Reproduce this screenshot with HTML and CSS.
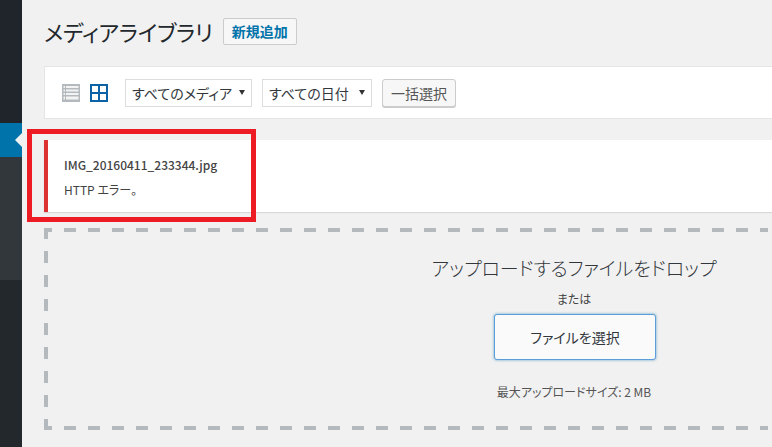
FILE: index.html
```html
<!DOCTYPE html>
<html lang="ja">
<head>
<meta charset="utf-8">
<title>メディアライブラリ</title>
<link rel="stylesheet" href="styles.css">
</head>
<body>
<aside class="sidebar">
  <div class="side-top"></div>
  <div class="side-active"><span class="side-arrow"></span></div>
  <div class="side-sub"></div>
  <div class="side-rest"></div>
</aside>
<main class="main">
  <header class="head">
    <h1 class="title">メディアライブラリ</h1>
    <a class="add-new">新規追加</a>
  </header>
  <section class="toolbar">
    <svg class="view-icon" width="18" height="18" viewBox="0 0 18 18" aria-hidden="true">
      <path fill="#b4b9be" d="M0 0h18v18H0z"/>
      <path fill="#f3f3f3" d="M1.500 2h1.500v2H1.500zM4 2h12.500v2H4zM1.500 5.500h1.500v2H1.500zM4 5.500h12.500v2H4zM1.500 9h1.500v2H1.500zM4 9h12.500v2H4zM1.500 12.500h1.500v3H1.500zM4 12.500h12.500v3H4z"/>
    </svg>
    <svg class="view-icon" width="18" height="18" viewBox="0 0 18 18" aria-hidden="true">
      <path fill="#0b62a4" d="M0 0h18v18H0z"/>
      <path fill="#fff" d="M2 2h6v6H2zM10 2h6v6h-6zM2 10h6v6H2zM10 10h6v6h-6z"/>
    </svg>
    <div class="select select-media">すべてのメディア<span class="caret"></span></div>
    <div class="select select-date">すべての日付<span class="caret"></span></div>
    <button class="btn-bulk">一括選択</button>
  </section>
  <section class="notice">
    <p class="file-name">IMG_20160411_233344.jpg</p>
    <p class="file-error">HTTP エラー。</p>
  </section>
  <section class="dropzone">
    <p class="drop-title">アップロードするファイルをドロップ</p>
    <p class="drop-or">または</p>
    <button class="btn-select">ファイルを選択</button>
    <p class="drop-max">最大アップロードサイズ: 2 MB</p>
  </section>
</main>
<div class="highlight"></div>
</body>
</html>
```
FILE: styles.css
```css
* { box-sizing: border-box; }
html, body { margin: 0; height: 100%; }
body {
  display: flex;
  width: 772px;
  height: 447px;
  overflow: hidden;
  position: relative;
  background: #f1f1f1;
  color: #444;
  font-family: "Noto Sans CJK JP", "Noto Sans", sans-serif;
  font-feature-settings: "palt";
}
p, h1 { margin: 0; }

.sidebar { width: 22px; flex: none; display: flex; flex-direction: column; background: #23282d; }
.side-top { height: 123px; background: #1f252a; }
.side-active { height: 34px; background: #0073aa; position: relative; }
.side-arrow {
  position: absolute; right: 0; top: 10px;
  border: 7px solid transparent; border-right-color: #f1f1f1; border-left-width: 0;
}
.side-sub { height: 123px; background: #32373c; }
.side-rest { flex: 1; background: #23282d; }

.main { flex: 1; min-width: 0; padding-left: 22px; }

.head { height: 66px; display: flex; align-items: flex-start; padding-top: 18px; }
.title { font-size: 22px; font-weight: 400; line-height: 27px; letter-spacing: -0.2px; color: #23282d; }
.add-new {
  margin-left: 10px; height: 27px; padding: 0 8px;
  background: #f7f7f7; border: 1px solid #ccc; border-radius: 2px;
  font-size: 14px; font-weight: 700; line-height: 25px; color: #0073aa;
}

.toolbar {
  height: 53px; display: flex; align-items: center; padding-left: 17px;
  background: #fff; border: 1px solid #e5e5e5; border-right: 0;
}
.view-icon { flex: none; margin-right: 10px; }
.select {
  height: 28px; display: flex; align-items: center; justify-content: space-between;
  padding: 0 6px; margin-right: 10px;
  border: 1px solid #ddd; font-size: 14px; color: #32373c; background: #fff;
}
.select-media { width: 127px; margin-left: 7px; }
.select-date { width: 110px; }
.caret { border: 3px solid transparent; border-top: 5px solid #333; border-bottom: 0; }
.btn-bulk {
  width: 74px; height: 28px; padding: 0;
  background: #f7f7f7; border: 1px solid #ccc; border-radius: 3px; box-shadow: 0 1px 0 #ccc;
  font: inherit; font-size: 14px; color: #555;
}

.notice {
  height: 72px; margin-top: 21px; padding: 15px 0 0 16px;
  background: #fff; border-left: 4px solid #dc3232; box-shadow: 0 1px 1px rgba(0,0,0,.1);
}
.file-name { font-size: 12px; font-weight: 500; line-height: 19px; color: #444; }
.file-error { font-size: 12px; line-height: 18px; margin-top: 7px; color: #444; }

.dropzone {
  height: 202px; margin-top: 16px;
  display: flex; flex-direction: column; align-items: center;
  padding: 28px 0 0 332px;
  background-image:
    repeating-linear-gradient(90deg, #b4b9be 0 12px, transparent 12px 24px),
    repeating-linear-gradient(90deg, #b4b9be 0 12px, transparent 12px 24px),
    repeating-linear-gradient(180deg, #b4b9be 0 12px, transparent 12px 24px);
  background-repeat: no-repeat;
  background-size: 100% 4px, 100% 4px, 4px 100%;
  background-position: -4px 0, -4px 100%, 0 -1px;
}
.drop-title { font-size: 19px; font-weight: 300; line-height: 24px; letter-spacing: -0.06px; color: #32373c; }
.drop-or { font-size: 12px; line-height: 18px; margin-top: 10px; color: #444; }
.btn-select {
  width: 162px; height: 46px; margin: 6px 0 0 2px; padding: 0;
  background: #fafafa; border: 1px solid #5b9dd9; border-radius: 3px;
  box-shadow: 0 0 3px rgba(0,115,170,.6);
  font: inherit; font-size: 14px; color: #32373c;
}
.drop-max { font-size: 12px; line-height: 18px; margin-top: 23px; color: #555; }

.highlight {
  position: absolute; left: 27px; top: 129px; width: 229px; height: 93px;
  border: 5px solid #ed1c24;
}
```
